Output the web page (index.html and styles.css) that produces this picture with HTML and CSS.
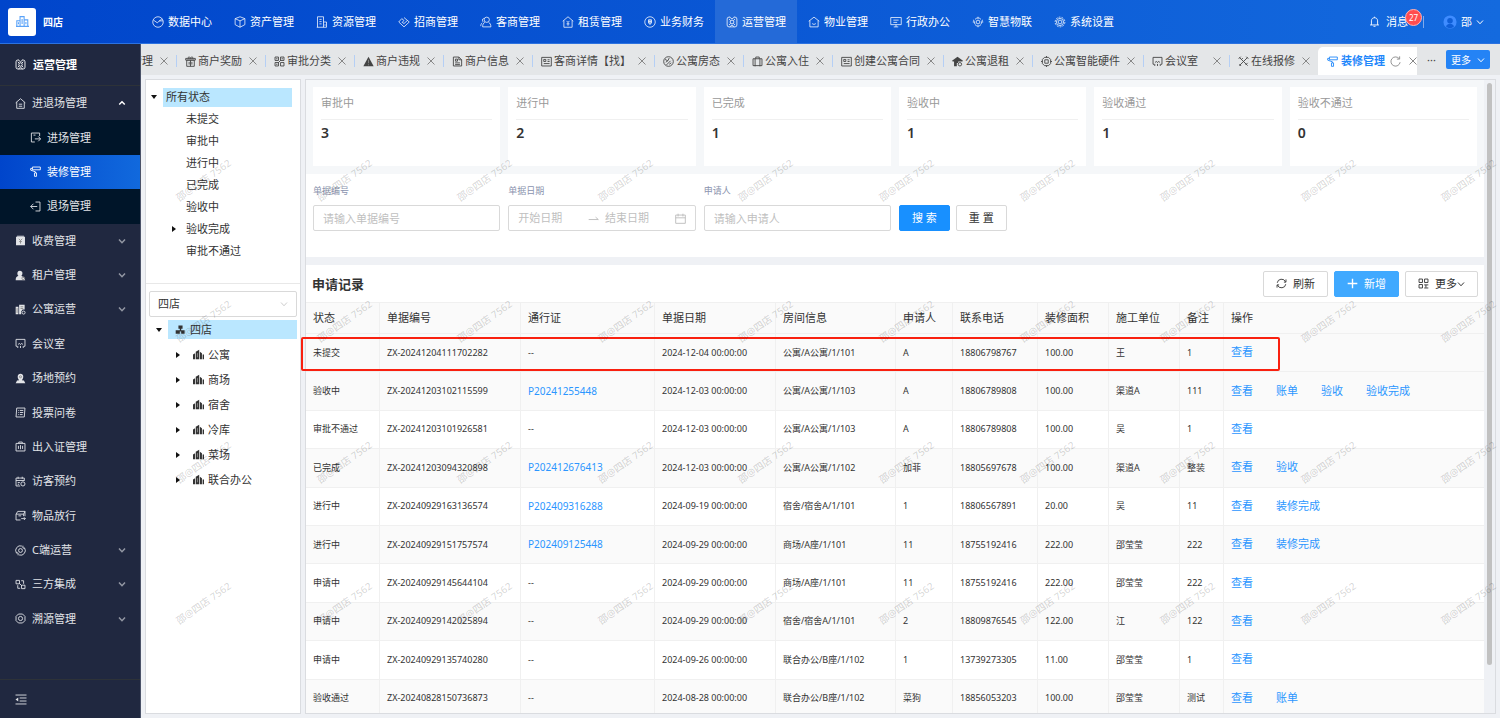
FILE: index.html
```
<!DOCTYPE html>
<html lang="zh-CN">
<head>
  <meta charset="UTF-8">
  <meta name="viewport" content="width=device-width, initial-scale=1.0">
  <title>装修管理</title>
  <link rel="stylesheet" href="styles.css">
</head>
<body>

  <!-- 图标 -->
  <svg class="sprite" aria-hidden="true">
    <symbol id="i-city" viewBox="0 0 16 16"><path d="M1 14V7h4v7M5 14V2h5v12M10 6h4.500v8M0 14h16M7.500 5v6M12.200 8.500v3M3 9v2.500"/></symbol>
    <symbol id="i-pie" viewBox="0 0 16 16"><circle cx="8" cy="8" r="7"/><path d="M2 5.500l5 3.500 6.500-5.500M9.500 6.500h5"/></symbol>
    <symbol id="i-box" viewBox="0 0 16 16"><path d="M8 1l6.500 2.500v8L8 15l-6.500-3.500v-8zM1.500 3.500L8 6.500l6.500-3M8 6.500V15"/></symbol>
    <symbol id="i-doc" viewBox="0 0 16 16"><path d="M2 15V1h8v14M10 8h4v7H1M4.500 4.500h3M4.500 7.500h3M4.500 10.500h3M12 11v2"/></symbol>
    <symbol id="i-shake" viewBox="0 0 16 16"><path d="M8 2l7 6-7 6.500L1 8l4-4.500 3 2.500-2.500 2.500L8 10l4.500-4"/></symbol>
    <symbol id="i-guest" viewBox="0 0 16 16"><circle cx="9" cy="5" r="3.500"/><path d="M6.500 8.500C4 9.500 3.500 12 3.500 14.500h11c0-3-1-5-3-6M5 3C2.500 4 3 7 4.500 8M3 9c-1.500 1-2 3-2 4.500"/></symbol>
    <symbol id="i-rent" viewBox="0 0 16 16"><path d="M1 7l7-6 7 6M2.500 6v9h11V6M6 6.500l2 2 2-2M8 8.500V13M6 10.500h4"/></symbol>
    <symbol id="i-exit-home" viewBox="0 0 16 16"><path d="M1 7l7-6 7 6M2.500 6v9h11V6M5.500 9h5M5.500 12h5"/></symbol>
    <symbol id="i-coin" viewBox="0 0 16 16"><circle cx="8" cy="8" r="7"/><path d="M6 5h4v4.500H6zM6 7.200h4M8 5v7"/></symbol>
    <symbol id="i-ops" viewBox="0 0 16 16"><path d="M5.500 1.500H4A2.500 2.500 0 0 0 1.500 4v8A2.500 2.500 0 0 0 4 14.500h8a2.500 2.500 0 0 0 2.500-2.500V4A2.500 2.500 0 0 0 12 1.500h-1.500M4 4l2 2M12 4l-2 2M4 12l2-2M12 12l-2-2M5 1.500L8 4l3-2.500M5 14.500L8 12l3 2.500"/><circle cx="8" cy="8" r="2.500"/></symbol>
    <symbol id="i-home" viewBox="0 0 16 16"><path d="M1 7l7-5.500L15 7M2.500 6v8.500h11V6M5.500 10c1.500 1.500 3.500 1.500 5 0"/></symbol>
    <symbol id="i-screen" viewBox="0 0 16 16"><path d="M1 2h14v9.500H1zM5 14.500h6M8 11.500v3M4.500 5.500h7M4.500 8.500h5"/></symbol>
    <symbol id="i-iot" viewBox="0 0 16 16"><circle cx="8" cy="8" r="2.500"/><path d="M4 4.500c2-2.500 6-2.500 8 0M4 11.500c2 2.500 6 2.500 8 0M1 8h2M13 8h2M2 5l2 6M14 5l-2 6M8 1v2M8 13v2"/></symbol>
    <symbol id="i-gear" viewBox="0 0 16 16"><circle cx="8" cy="8" r="2.500"/><circle cx="8" cy="8" r="6.500" stroke-dasharray="2.500 1.500"/><circle cx="8" cy="8" r="4.800"/></symbol>
    <symbol id="i-bell" viewBox="0 0 16 16"><path d="M1.500 13h13M3.500 13V7c0-6 9-6 9 0v6M8 1v1.500M6.500 15h3"/></symbol>
    <symbol id="i-user" viewBox="0 0 16 16"><circle cx="8" cy="8" r="7.500" fill="#3f8cff" stroke="none"/><circle cx="8" cy="6.500" r="3.200" fill="#0f5fd8" stroke="none"/><path d="M3.500 13c1-4 8-4 9 0-2.500 2.500-6.500 2.500-9 0z" fill="#0f5fd8" stroke="none"/></symbol>
    <symbol id="i-down" viewBox="0 0 16 16"><path d="M2 5l6 6.500L14 5"/></symbol>
    <symbol id="i-up" viewBox="0 0 16 16"><path d="M2.500 11L8 5.500l5.500 5.500"/></symbol>
    <symbol id="i-close" viewBox="0 0 16 16"><path d="M1 1l14 14M15 1L1 15"/></symbol>
    <symbol id="i-in" viewBox="0 0 16 16"><path d="M14 6V1.500H2v13h5M5 4.500h3M7 10h8M12 6.500l3.500 3.500-3.500 3.500"/></symbol>
    <symbol id="i-roller" viewBox="0 0 16 16"><path d="M3.500 1.500H15v4H3.500zM3.500 3.500H1V6l7 2.500V10M6.500 10h3v5h-3z"/></symbol>
    <symbol id="i-out" viewBox="0 0 16 16"><path d="M8 1.500h6.500v13H8M10.500 8H1M5 4L1 8l4 4"/></symbol>
    <symbol id="i-fee" viewBox="0 0 16 16"><path class="solid" d="M1.500 2.500h13V15h-13zM3 1h10v1H3z"/><path class="cut" d="M5.500 5.500L8 8l2.500-2.500M8 8v4.500M6 9.500h4"/></symbol>
    <symbol id="i-tenant" viewBox="0 0 16 16"><path class="solid" d="M7 1c5 0 4.500 6 2 7.500l3 1.500 3 5H1c0-4 1-5 4-6.500C2.500 6 3 1 7 1z"/><circle class="cut" cx="12" cy="12" r="2"/></symbol>
    <symbol id="i-apart" viewBox="0 0 16 16"><path class="solid" d="M1 4h4v11H1zM6 1h8v7h-3l-2 3v4H6z"/><circle cx="12.500" cy="12.500" r="2.200"/><path class="cut" d="M8 4h4M8 6.500h4M3 6v7"/></symbol>
    <symbol id="i-meet" viewBox="0 0 16 16"><path d="M3 12H1.500V2h13v10H13M4 14.500v-3M12 14.500v-3M8 14.500v-3M5 9.500c0-2 2-2 3 0 1-2 3-2 3 0"/></symbol>
    <symbol id="i-venue" viewBox="0 0 16 16"><path class="solid" d="M1 15l2-4 3-.5C3 7 3 1 8 1s5 6 2 9.500l3 .5 2 4z"/><circle class="cut" cx="8" cy="5.500" r="1.500"/></symbol>
    <symbol id="i-vote" viewBox="0 0 16 16"><path d="M2.500 1.500h12l-1 13h-12zM4.500 5h1M7 5h5M4.500 8h1M7 8h5M4.500 11h1M7 11h4"/></symbol>
    <symbol id="i-pass" viewBox="0 0 16 16"><path d="M1.500 3.500h13v11h-13zM5.500 3.500v-2h5v2M5 7v4.500M8 6v6M11 7v4.500"/></symbol>
    <symbol id="i-visit" viewBox="0 0 16 16"><path d="M1.500 3h12v4M1.500 3v11.500h6M1.500 6.500h12M4.500 1v3M10.500 1v3M4 9.500h3M4 12h2"/><circle cx="11.500" cy="11.500" r="3"/></symbol>
    <symbol id="i-goods" viewBox="0 0 16 16"><path d="M1.500 6h11v3M8 14.500H1.500V6L4 2h10.500v7M12.500 6l2-4M5 8.500h4M9 12.500h6M13 10.500l2 2-2 2"/></symbol>
    <symbol id="i-c" viewBox="0 0 16 16"><path d="M10 1.500A6.800 6.800 0 0 0 2 11.500M6 14.500A6.800 6.800 0 0 0 14 4.500M11.500 1v3.500h3M4.500 15v-3.500h-3"/><circle cx="8" cy="8" r="2.800"/></symbol>
    <symbol id="i-flow" viewBox="0 0 16 16"><path d="M1.500 2h5v5h-5zM9.500 9h5v5h-5zM9 2.500h3.500V7M4 9v4.500h3.500M6 6l4 4"/></symbol>
    <symbol id="i-ring" viewBox="0 0 16 16"><path d="M5 1.500h6L14.500 5v6L11 14.500H5L1.500 11V5z"/><circle cx="8" cy="8" r="3"/></symbol>
    <symbol id="i-fold" viewBox="0 0 16 16"><path d="M0 1.500h16M6 5.800h10M6 10.200h10M0 14.500h16"/><path class="solid" d="M0 8l4-3v6z"/></symbol>
    <symbol id="i-gift" viewBox="0 0 16 16"><path d="M2.500 6h11v9h-11zM1 3.500h14V6H1zM5 3.500c-1-3 2-3 3 0 1-3 4-3 3 0M6 8.500v4M10 8.500v4M8 6v9"/></symbol>
    <symbol id="i-class" viewBox="0 0 16 16"><path d="M1.500 1.500h5v5h-5zM9.500 1.500h5v5h-5zM1.500 9.500h5v5h-5zM9.500 9.500h5v5h-5zM10 6l-4 4M3 4h2M11 4h2M3 12h2"/></symbol>
    <symbol id="i-warn" viewBox="0 0 16 16"><path class="solid" d="M8 1l7.500 14H.5z"/><path class="cut" d="M8 5.500v5M8 12v1.500"/></symbol>
    <symbol id="i-info" viewBox="0 0 16 16"><path d="M2 1.500h8l4 4v9H2zM5 4.500h3v3H5zM4.500 10h7M4.500 12.500h7M10 1.500v4h4"/></symbol>
    <symbol id="i-news" viewBox="0 0 16 16"><path d="M1 2h14v12.500H1zM4 5h3v3H4zM9.500 5.500h3M9.500 8h3M4 11h8.500"/></symbol>
    <symbol id="i-state" viewBox="0 0 16 16"><circle cx="8" cy="8" r="7"/><path d="M3 5l4 2 2-4M5 13l6-6M9 12l3-2M4 9l3-2"/></symbol>
    <symbol id="i-bag" viewBox="0 0 16 16"><path d="M1.500 4h13v10h-13zM5.500 4V1.500h5V4M4.500 4v11M11.500 4v11"/></symbol>
    <symbol id="i-leave" viewBox="0 0 16 16"><path class="solid" d="M0 7l8-6 8 6-1 1H9v2H7v5H3V8H1z"/><circle cx="11.500" cy="12" r="2.500"/></symbol>
    <symbol id="i-chip" viewBox="0 0 16 16"><path d="M5 2h6l3 3v6l-3 3H5l-3-3V5zM5.500 5.500h5v5h-5zM0 8h2M14 8h2M8 0v2M8 14v2"/></symbol>
    <symbol id="i-tools" viewBox="0 0 16 16"><path d="M2 2l12 12M14 2L2 14M1 4l3-3M12 1l3 3M11 13l3-3M2 12l2.500 2.500M5 5l2-2"/></symbol>
    <symbol id="i-reload" viewBox="0 0 16 16"><path d="M13 3.500A6.700 6.700 0 1 0 14.700 9M14 .5v4h-4"/></symbol>
    <symbol id="i-sync" viewBox="0 0 16 16"><path d="M1.800 7a6.300 6.300 0 0 1 12-1.500M14.200 9a6.300 6.300 0 0 1-12 1.500M14.500 2v4h-3M1.500 14v-4h3"/></symbol>
    <symbol id="i-plus" viewBox="0 0 16 16"><path d="M8 1v14M1 8h14"/></symbol>
    <symbol id="i-grid" viewBox="0 0 16 16"><path d="M1.500 1.500h5v5h-5zM9.500 1.500h5v5h-5zM1.500 9.500h5v5h-5zM9 10h6M9 14.500h6M11.500 10v4"/></symbol>
    <symbol id="i-cal" viewBox="0 0 16 16"><path d="M1 3h14v12H1zM1 7h14M4.500 1v4M11.500 1v4"/></symbol>
    <symbol id="i-to" viewBox="0 0 16 16"><path d="M1 9.500h14L11 6"/></symbol>
    <symbol id="i-org" viewBox="0 0 16 16"><path class="solid" d="M5 2h6v5H9v2h5v5H9v-3H7v3H1V9h6V7H5z"/></symbol>
    <symbol id="i-tower" viewBox="0 0 16 16"><path class="solid" d="M0 8l3-2v9H0zM4 4l5-3v14H4zM10 4l3 2v9h-3zM14 8h2v7h-2z"/><path class="cut" d="M6.500 6v6"/></symbol>
  </svg>

  <!-- 顶部导航 -->
  <header class="topbar">
    <div class="brand">
      <span class="logo"><svg class="icon"><use href="#i-city"/></svg></span>
      <strong>四店</strong>
    </div>
    <nav class="topnav">
      <a href="#"><svg class="icon"><use href="#i-pie"/></svg>数据中心</a>
      <a href="#"><svg class="icon"><use href="#i-box"/></svg>资产管理</a>
      <a href="#"><svg class="icon"><use href="#i-doc"/></svg>资源管理</a>
      <a href="#"><svg class="icon"><use href="#i-shake"/></svg>招商管理</a>
      <a href="#"><svg class="icon"><use href="#i-guest"/></svg>客商管理</a>
      <a href="#"><svg class="icon"><use href="#i-rent"/></svg>租赁管理</a>
      <a href="#"><svg class="icon"><use href="#i-coin"/></svg>业务财务</a>
      <a href="#" class="active"><svg class="icon"><use href="#i-ops"/></svg>运营管理</a>
      <a href="#"><svg class="icon"><use href="#i-home"/></svg>物业管理</a>
      <a href="#"><svg class="icon"><use href="#i-screen"/></svg>行政办公</a>
      <a href="#"><svg class="icon"><use href="#i-iot"/></svg>智慧物联</a>
      <a href="#"><svg class="icon"><use href="#i-gear"/></svg>系统设置</a>
    </nav>
    <div class="topbar-right">
      <a href="#" class="message"><svg class="icon"><use href="#i-bell"/></svg>消息<span class="badge">27</span></a>
      <button type="button" class="account"><svg class="avatar"><use href="#i-user"/></svg>邵<svg class="icon-s"><use href="#i-down"/></svg></button>
    </div>
  </header>

  <div class="layout">
    <!-- 侧边菜单 -->
    <aside class="sidebar">
      <div class="side-title"><svg class="icon"><use href="#i-ops"/></svg>运营管理</div>
      <nav class="menu">
        <a href="#" class="menu-item"><svg class="icon"><use href="#i-exit-home"/></svg>进退场管理<svg class="icon-s arrow open"><use href="#i-up"/></svg></a>
        <div class="submenu">
          <a href="#" class="menu-item"><svg class="icon"><use href="#i-in"/></svg>进场管理</a>
          <a href="#" class="menu-item active"><svg class="icon"><use href="#i-roller"/></svg>装修管理</a>
          <a href="#" class="menu-item"><svg class="icon"><use href="#i-out"/></svg>退场管理</a>
        </div>
        <a href="#" class="menu-item"><svg class="icon"><use href="#i-fee"/></svg>收费管理<svg class="icon-s arrow"><use href="#i-down"/></svg></a>
        <a href="#" class="menu-item"><svg class="icon"><use href="#i-tenant"/></svg>租户管理<svg class="icon-s arrow"><use href="#i-down"/></svg></a>
        <a href="#" class="menu-item"><svg class="icon"><use href="#i-apart"/></svg>公寓运营<svg class="icon-s arrow"><use href="#i-down"/></svg></a>
        <a href="#" class="menu-item"><svg class="icon"><use href="#i-meet"/></svg>会议室</a>
        <a href="#" class="menu-item"><svg class="icon"><use href="#i-venue"/></svg>场地预约</a>
        <a href="#" class="menu-item"><svg class="icon"><use href="#i-vote"/></svg>投票问卷</a>
        <a href="#" class="menu-item"><svg class="icon"><use href="#i-pass"/></svg>出入证管理</a>
        <a href="#" class="menu-item"><svg class="icon"><use href="#i-visit"/></svg>访客预约</a>
        <a href="#" class="menu-item"><svg class="icon"><use href="#i-goods"/></svg>物品放行</a>
        <a href="#" class="menu-item"><svg class="icon"><use href="#i-c"/></svg>C端运营<svg class="icon-s arrow"><use href="#i-down"/></svg></a>
        <a href="#" class="menu-item"><svg class="icon"><use href="#i-flow"/></svg>三方集成<svg class="icon-s arrow"><use href="#i-down"/></svg></a>
        <a href="#" class="menu-item"><svg class="icon"><use href="#i-ring"/></svg>溯源管理<svg class="icon-s arrow"><use href="#i-down"/></svg></a>
      </nav>
      <button type="button" class="collapse" aria-label="收起菜单"><svg class="icon"><use href="#i-fold"/></svg></button>
    </aside>

    <main class="main">
      <!-- 页签 -->
      <div class="tabbar">
        <div class="tabs">
          <a href="#" class="tab">管理<svg class="close"><use href="#i-close"/></svg></a>
          <a href="#" class="tab"><svg class="icon"><use href="#i-gift"/></svg>商户奖励<svg class="close"><use href="#i-close"/></svg></a>
          <a href="#" class="tab"><svg class="icon"><use href="#i-class"/></svg>审批分类<svg class="close"><use href="#i-close"/></svg></a>
          <a href="#" class="tab"><svg class="icon"><use href="#i-warn"/></svg>商户违规<svg class="close"><use href="#i-close"/></svg></a>
          <a href="#" class="tab"><svg class="icon"><use href="#i-info"/></svg>商户信息<svg class="close"><use href="#i-close"/></svg></a>
          <a href="#" class="tab"><svg class="icon"><use href="#i-news"/></svg>客商详情【找】<svg class="close"><use href="#i-close"/></svg></a>
          <a href="#" class="tab"><svg class="icon"><use href="#i-state"/></svg>公寓房态<svg class="close"><use href="#i-close"/></svg></a>
          <a href="#" class="tab"><svg class="icon"><use href="#i-bag"/></svg>公寓入住<svg class="close"><use href="#i-close"/></svg></a>
          <a href="#" class="tab"><svg class="icon"><use href="#i-news"/></svg>创建公寓合同<svg class="close"><use href="#i-close"/></svg></a>
          <a href="#" class="tab"><svg class="icon"><use href="#i-leave"/></svg>公寓退租<svg class="close"><use href="#i-close"/></svg></a>
          <a href="#" class="tab"><svg class="icon"><use href="#i-chip"/></svg>公寓智能硬件<svg class="close"><use href="#i-close"/></svg></a>
          <a href="#" class="tab short"><svg class="icon"><use href="#i-meet"/></svg>会议室<svg class="close"><use href="#i-close"/></svg></a>
          <a href="#" class="tab"><svg class="icon"><use href="#i-tools"/></svg>在线报修<svg class="close"><use href="#i-close"/></svg></a>
          <a href="#" class="tab active"><svg class="icon"><use href="#i-roller"/></svg>装修管理<svg class="reload"><use href="#i-reload"/></svg><svg class="close"><use href="#i-close"/></svg></a>
        </div>
        <span class="dots">···</span>
        <button type="button" class="tab-more">更多<svg class="icon-s"><use href="#i-down"/></svg></button>
      </div>

      <div class="workspace">
        <!-- 左侧树 -->
        <section class="trees">
          <div class="status-tree">
            <ul>
              <li class="root"><span class="caret down"></span><span class="node">所有状态</span></li>
              <li>未提交</li>
              <li>审批中</li>
              <li>进行中</li>
              <li>已完成</li>
              <li>验收中</li>
              <li><span class="caret"></span>验收完成</li>
              <li>审批不通过</li>
            </ul>
          </div>
          <div class="place-tree">
            <div class="select">
              <select aria-label="门店"><option>四店</option></select>
              <svg class="icon-s"><use href="#i-down"/></svg>
            </div>
            <ul>
              <li class="root"><span class="caret down"></span><span class="node"><svg class="icon"><use href="#i-org"/></svg>四店</span></li>
              <li><span class="caret"></span><svg class="icon"><use href="#i-tower"/></svg>公寓</li>
              <li><span class="caret"></span><svg class="icon"><use href="#i-tower"/></svg>商场</li>
              <li><span class="caret"></span><svg class="icon"><use href="#i-tower"/></svg>宿舍</li>
              <li><span class="caret"></span><svg class="icon"><use href="#i-tower"/></svg>冷库</li>
              <li><span class="caret"></span><svg class="icon"><use href="#i-tower"/></svg>菜场</li>
              <li><span class="caret"></span><svg class="icon"><use href="#i-tower"/></svg>联合办公</li>
            </ul>
          </div>
        </section>

        <section class="content">
          <div class="content-body">
            <!-- 统计卡片 -->
            <div class="cards">
              <div class="card"><h3>审批中</h3><p>3</p></div>
              <div class="card"><h3>进行中</h3><p>2</p></div>
              <div class="card"><h3>已完成</h3><p>1</p></div>
              <div class="card"><h3>验收中</h3><p>1</p></div>
              <div class="card"><h3>验收通过</h3><p>1</p></div>
              <div class="card"><h3>验收不通过</h3><p>0</p></div>
            </div>

            <!-- 查询条件 -->
            <form class="search">
              <div class="field">
                <label for="code">单据编号</label>
                <input type="text" id="code" class="input" placeholder="请输入单据编号">
              </div>
              <div class="field">
                <label for="date-start">单据日期</label>
                <div class="input range">
                  <input type="text" id="date-start" placeholder="开始日期">
                  <svg class="icon"><use href="#i-to"/></svg>
                  <input type="text" aria-label="结束日期" placeholder="结束日期">
                  <svg class="icon"><use href="#i-cal"/></svg>
                </div>
              </div>
              <div class="field">
                <label for="applicant">申请人</label>
                <input type="text" id="applicant" class="input" placeholder="请输入申请人">
              </div>
              <div class="actions">
                <button type="button" class="btn primary">搜 索</button>
                <button type="button" class="btn">重 置</button>
              </div>
            </form>

            <!-- 申请记录 -->
            <div class="records">
              <div class="records-head">
                <h2>申请记录</h2>
                <button type="button" class="btn"><svg class="icon"><use href="#i-sync"/></svg>刷新</button>
                <button type="button" class="btn add"><svg class="icon"><use href="#i-plus"/></svg>新增</button>
                <button type="button" class="btn more"><svg class="icon"><use href="#i-grid"/></svg><span>更多<svg class="icon-s"><use href="#i-down"/></svg></span></button>
              </div>
              <table>
                <colgroup>
                  <col class="c-status"><col class="c-code"><col class="c-pass"><col class="c-date"><col class="c-room"><col class="c-user"><col class="c-tel"><col class="c-area"><col class="c-unit"><col class="c-note"><col>
                </colgroup>
                <thead>
                  <tr><th>状态</th><th>单据编号</th><th>通行证</th><th>单据日期</th><th>房间信息</th><th>申请人</th><th>联系电话</th><th>装修面积</th><th>施工单位</th><th>备注</th><th>操作</th></tr>
                </thead>
                <tbody>
                  <tr class="hover"><td>未提交</td><td>ZX-20241204111702282</td><td>--</td><td>2024-12-04 00:00:00</td><td>公寓/A公寓/1/101</td><td>A</td><td>18806798767</td><td>100.00</td><td>王</td><td>1</td><td><a href="#">查看</a></td></tr>
                  <tr><td>验收中</td><td>ZX-20241203102115599</td><td><a href="#">P20241255448</a></td><td>2024-12-03 00:00:00</td><td>公寓/A公寓/1/103</td><td>A</td><td>18806789808</td><td>100.00</td><td>渠道A</td><td>111</td><td><a href="#">查看</a><a href="#">账单</a><a href="#">验收</a><a href="#">验收完成</a></td></tr>
                  <tr><td>审批不通过</td><td>ZX-20241203101926581</td><td>--</td><td>2024-12-03 00:00:00</td><td>公寓/A公寓/1/103</td><td>A</td><td>18806789808</td><td>100.00</td><td>吴</td><td>1</td><td><a href="#">查看</a></td></tr>
                  <tr><td>已完成</td><td>ZX-20241203094320898</td><td><a href="#">P202412676413</a></td><td>2024-12-03 00:00:00</td><td>公寓/A公寓/1/102</td><td>加菲</td><td>18805697678</td><td>100.00</td><td>渠道A</td><td>整装</td><td><a href="#">查看</a><a href="#">验收</a></td></tr>
                  <tr><td>进行中</td><td>ZX-20240929163136574</td><td><a href="#">P202409316288</a></td><td>2024-09-19 00:00:00</td><td>宿舍/宿舍A/1/101</td><td>1</td><td>18806567891</td><td>20.00</td><td>吴</td><td>11</td><td><a href="#">查看</a><a href="#">装修完成</a></td></tr>
                  <tr><td>进行中</td><td>ZX-20240929151757574</td><td><a href="#">P202409125448</a></td><td>2024-09-29 00:00:00</td><td>商场/A座/1/101</td><td>11</td><td>18755192416</td><td>222.00</td><td>邵莹莹</td><td>222</td><td><a href="#">查看</a><a href="#">装修完成</a></td></tr>
                  <tr><td>申请中</td><td>ZX-20240929145644104</td><td>--</td><td>2024-09-29 00:00:00</td><td>商场/A座/1/101</td><td>11</td><td>18755192416</td><td>222.00</td><td>邵莹莹</td><td>222</td><td><a href="#">查看</a></td></tr>
                  <tr><td>申请中</td><td>ZX-20240929142025894</td><td>--</td><td>2024-09-29 00:00:00</td><td>宿舍/宿舍A/1/101</td><td>2</td><td>18809876545</td><td>122.00</td><td>江</td><td>122</td><td><a href="#">查看</a></td></tr>
                  <tr><td>申请中</td><td>ZX-20240929135740280</td><td>--</td><td>2024-09-26 00:00:00</td><td>联合办公/B座/1/102</td><td>1</td><td>13739273305</td><td>11.00</td><td>邵莹莹</td><td>1</td><td><a href="#">查看</a></td></tr>
                  <tr><td>验收通过</td><td>ZX-20240828150736873</td><td>--</td><td>2024-08-28 00:00:00</td><td>联合办公/B座/1/102</td><td>菜狗</td><td>18856053203</td><td>100.00</td><td>邵莹莹</td><td>测试</td><td><a href="#">查看</a><a href="#">账单</a></td></tr>
                </tbody>
              </table>
            </div>
          </div>
          <div class="scroll"><span></span></div>
        </section>

        <!-- 标注框 -->
        <div class="mark"></div>
      </div>
    </main>
  </div>

  <!-- 水印 -->
  <div class="watermark" aria-hidden="true">
    <span>邵@四店 7562</span><span>邵@四店 7562</span><span>邵@四店 7562</span><span>邵@四店 7562</span><span>邵@四店 7562</span><span>邵@四店 7562</span><span>邵@四店 7562</span><span>邵@四店 7562</span><span>邵@四店 7562</span><span>邵@四店 7562</span>
    <span>邵@四店 7562</span><span>邵@四店 7562</span><span>邵@四店 7562</span><span>邵@四店 7562</span><span>邵@四店 7562</span><span>邵@四店 7562</span><span>邵@四店 7562</span><span>邵@四店 7562</span><span>邵@四店 7562</span><span>邵@四店 7562</span>
    <span>邵@四店 7562</span><span>邵@四店 7562</span><span>邵@四店 7562</span><span>邵@四店 7562</span><span>邵@四店 7562</span><span>邵@四店 7562</span><span>邵@四店 7562</span><span>邵@四店 7562</span><span>邵@四店 7562</span><span>邵@四店 7562</span>
    <span>邵@四店 7562</span><span>邵@四店 7562</span><span>邵@四店 7562</span><span>邵@四店 7562</span><span>邵@四店 7562</span><span>邵@四店 7562</span><span>邵@四店 7562</span><span>邵@四店 7562</span><span>邵@四店 7562</span><span>邵@四店 7562</span>
  </div>

</body>
</html>
```

FILE: styles.css
```
* {
  box-sizing: border-box;
}

body {
  margin: 0;
  height: 100vh;
  display: flex;
  flex-direction: column;
  overflow: hidden;
  position: relative;
  background: #eff1f5;
  color: #333;
  font: 11px/16px "Noto Sans", "Noto Sans CJK SC", sans-serif;
}

a {
  color: inherit;
  text-decoration: none;
}

button,
input,
select {
  font: inherit;
  color: inherit;
}

button {
  cursor: pointer;
}

ul {
  list-style: none;
  margin: 0;
  padding: 0;
}

/* 图标 */
.sprite {
  position: absolute;
  width: 0;
  height: 0;
}

svg {
  flex: none;
  fill: none;
  stroke: currentColor;
  stroke-width: 1.3;
}

.solid {
  fill: currentColor;
  stroke: none;
}

.cut {
  stroke: #888;
}

.icon {
  width: 11px;
  height: 11px;
}

.icon-s {
  width: 8px;
  height: 8px;
  stroke-width: 2;
}

/* 顶部导航 */
.topbar {
  flex: none;
  height: 44px;
  display: flex;
  align-items: stretch;
  background: linear-gradient(90deg, #0045cb, #146ade);
  border-bottom: 1px solid #2c72e0;
  color: #fff;
}

.brand {
  width: 141px;
  flex: none;
  display: flex;
  align-items: center;
  gap: 7px;
  padding-left: 8px;
  font-size: 10px;
}

.logo {
  width: 28px;
  height: 28px;
  display: flex;
  align-items: center;
  justify-content: center;
  background: #fff;
  border-radius: 3px;
  color: #5aa2f8;
}

.logo .icon {
  width: 13px;
  height: 13px;
}

.topnav {
  display: flex;
  flex: 1;
}

.topnav a {
  display: flex;
  align-items: center;
  gap: 4px;
  padding: 0 11px;
  white-space: nowrap;
}

.topnav .icon {
  width: 12px;
  height: 12px;
  stroke-width: 1;
}

.topnav .active {
  background: #246ad8;
}

.topbar-right {
  display: flex;
  align-items: center;
  gap: 19px;
  padding-right: 16px;
}

.message {
  position: relative;
  display: flex;
  align-items: center;
  gap: 6px;
  padding-right: 15px;
  border-right: 1px solid #7fa9ec;
  line-height: 12px;
}

.badge {
  position: absolute;
  top: -7px;
  right: 1px;
  width: 17px;
  height: 17px;
  border: 1px solid #ffb3b3;
  border-radius: 9px;
  background: #ff4d4f;
  font-size: 8px;
  line-height: 15px;
  text-align: center;
}

.account {
  display: flex;
  align-items: center;
  gap: 4px;
  padding: 0;
  border: 0;
  background: none;
}

.avatar {
  width: 14px;
  height: 14px;
}

/* 侧边菜单 */
.layout {
  flex: 1;
  min-height: 0;
  display: flex;
}

.sidebar {
  flex: none;
  width: 141px;
  display: flex;
  flex-direction: column;
  background: #202840;
  border-right: 1px solid #4a5268;
  color: #e2e4e8;
}

.side-title {
  flex: none;
  height: 42px;
  display: flex;
  align-items: center;
  gap: 7px;
  padding-left: 15px;
  border-bottom: 1px solid #2d3238;
  color: #fff;
  font-weight: bold;
}

.menu {
  flex: 1;
  display: flex;
  flex-direction: column;
  padding-bottom: 43px;
}

.menu-item {
  flex: 1;
  display: flex;
  align-items: center;
  gap: 6px;
  padding: 0 14px 0 15px;
}

.arrow {
  margin-left: auto;
  color: #9297a3;
  stroke-width: 3;
}

.arrow.open {
  color: #fff;
}

.submenu {
  flex: 3;
  display: flex;
  flex-direction: column;
  background: #001529;
}

.submenu .menu-item {
  padding-left: 30px;
}

.menu-item.active {
  background: linear-gradient(90deg, #0045cb, #1169dd);
  color: #fff;
}

.collapse {
  flex: none;
  height: 39px;
  display: flex;
  align-items: center;
  padding: 0 15px;
  border: 0;
  border-top: 1px solid #2d3238;
  background: none;
}

.collapse .icon {
  width: 12px;
}

/* 页签 */
.main {
  flex: 1;
  min-width: 0;
  display: flex;
  flex-direction: column;
}

.tabbar {
  flex: none;
  height: 31px;
  display: flex;
  align-items: center;
  padding-right: 10px;
  background: #e4e6e8;
  color: #444;
}

.tabs {
  flex: 1;
  min-width: 0;
  align-self: stretch;
  display: flex;
  align-items: center;
  justify-content: flex-end;
  overflow: hidden;
  padding-top: 3px;
}

.tab {
  flex: none;
  display: flex;
  align-items: center;
  gap: 2px;
  padding: 0 8px;
  border-left: 1px solid #b5cff5;
  line-height: 12px;
  white-space: nowrap;
}

.close {
  width: 8px;
  height: 8px;
  margin-left: 5px;
  color: #888;
  stroke-width: 2;
}

.tab.short {
  width: 86px;
}

.short .close {
  margin-left: auto;
}

.tab.active {
  align-self: stretch;
  gap: 3px;
  padding: 0 0 0 9px;
  width: 99px;
  border: 0;
  border-radius: 5px 0 0 0;
  background: #fff;
  color: #1f87fb;
  font-weight: bold;
}

.reload {
  width: 11px;
  height: 11px;
  margin-left: 2px;
  color: #888;
}

.dots {
  width: 29px;
  text-align: center;
}

.tab-more {
  width: 44px;
  height: 19px;
  display: flex;
  align-items: center;
  justify-content: center;
  gap: 6px;
  padding: 0;
  border: 0;
  border-radius: 2px;
  background: #2483f5;
  color: #fff;
  font-size: 10px;
}

/* 工作区 */
.workspace {
  flex: 1;
  min-height: 0;
  position: relative;
  display: flex;
  gap: 4px;
  padding: 4px;
}

.trees {
  flex: none;
  width: 156px;
  display: flex;
  flex-direction: column;
  background: #fff;
  border: 1px solid #dadce0;
}

.status-tree {
  height: 204px;
  flex: none;
  padding: 6px 8px 0 5px;
  border-bottom: 1px solid #e8e8e8;
}

.status-tree li {
  position: relative;
  height: 22px;
  padding-left: 35px;
  line-height: 22px;
}

.trees .root {
  display: flex;
  align-items: center;
  padding-left: 0;
}

.node {
  flex: 1;
  height: 19px;
  display: flex;
  align-items: center;
  gap: 4px;
  margin-left: 6px;
  padding-left: 3px;
  background: #bae7ff;
}

.caret {
  width: 0;
  height: 0;
  border: solid transparent;
  border-width: 3px 0 3px 4px;
  border-left-color: #111;
}

.caret.down {
  border-width: 4px 3px 0;
  border-color: #111 transparent transparent;
}

.status-tree .caret:not(.down) {
  position: absolute;
  left: 21px;
  top: 8px;
}

.place-tree {
  padding: 7px 3px 0;
}

.select {
  position: relative;
}

.select select {
  display: block;
  width: 100%;
  height: 26px;
  padding: 0 8px;
  border: 1px solid #d9d9d9;
  border-radius: 2px;
  background: #fff;
  appearance: none;
}

.select svg {
  position: absolute;
  right: 9px;
  top: 9px;
  color: #bbb;
  stroke-width: 1.5;
}

.place-tree li {
  height: 25px;
  display: flex;
  align-items: center;
  padding-left: 27px;
}

.place-tree li .icon {
  color: #333;
}

.place-tree li > .icon {
  margin: 0 4px 0 13px;
}

.place-tree .root .caret {
  margin-left: 7px;
}

.place-tree .node {
  padding-left: 7px;
}

.content {
  flex: 1;
  min-width: 0;
  display: flex;
  border: 1px solid #dadce0;
}

.content-body {
  flex: 1;
  min-width: 0;
  display: flex;
  flex-direction: column;
  overflow: hidden;
}

.scroll {
  flex: none;
  width: 11px;
  padding: 3px 3px 48px;
}

.scroll span {
  display: block;
  width: 5px;
  height: 100%;
  border-radius: 3px;
  background: #c1c1c1;
}

/* 统计卡片 */
.cards {
  display: grid;
  grid-template-columns: repeat(6, minmax(0, 1fr));
  gap: 8px;
  padding: 7px 7px 8px;
  background: #f5f7f9;
}

.card {
  height: 79px;
  padding: 8px 8px 0;
  background: #fff;
}

.card h3 {
  margin: 0;
  height: 25px;
  border-bottom: 1px solid #f0f0f0;
  color: #999;
  font-size: 11px;
  font-weight: normal;
}

.card p {
  margin: 5px 0 0;
  font-size: 14px;
  font-weight: 600;
}

/* 查询条件 */
.search {
  display: grid;
  grid-template-columns: repeat(6, minmax(0, 1fr));
  gap: 8px;
  padding: 9px 7px 26px;
  background: #fff;
}

.field label {
  display: block;
  margin-bottom: 6px;
  color: #8a93ae;
  font-size: 9px;
}

.input {
  width: 100%;
  height: 26px;
  padding: 0 9px;
  border: 1px solid #d9d9d9;
  border-radius: 2px;
  background: #fff;
}

.range {
  display: flex;
  align-items: center;
  color: #bbb;
}

.range input {
  flex: 1;
  min-width: 0;
  padding: 0;
  border: 0;
}

.range .icon:not(:last-child) {
  margin-right: 6px;
}

::placeholder {
  color: #bfbfbf;
}

.actions {
  display: flex;
  align-items: flex-end;
  gap: 6px;
}

.btn {
  height: 26px;
  display: flex;
  align-items: center;
  gap: 6px;
  padding: 0 12px;
  border: 1px solid #d9d9d9;
  border-radius: 2px;
  background: #fff;
  white-space: nowrap;
}

.btn.primary {
  border-color: #1890ff;
  background: #1890ff;
  color: #fff;
}

.btn.add {
  border-color: #40a9ff;
  background: #40a9ff;
  color: #fff;
}

.add .icon {
  stroke-width: 2;
}

/* 申请记录 */
.records {
  flex: 1;
  margin-top: 8px;
  background: #fff;
}

.records-head {
  height: 37px;
  display: flex;
  align-items: center;
  gap: 6px;
  padding: 0 6px;
}

.records-head h2 {
  flex: 1;
  margin: 0;
  font-size: 13px;
}

.more span {
  display: flex;
  align-items: center;
}

table {
  width: 100%;
  height: 416px;
  table-layout: fixed;
  border-collapse: separate;
  border-spacing: 0;
}

.c-status { width: 74px; }
.c-code { width: 141px; }
.c-pass { width: 134px; }
.c-date { width: 121px; }
.c-room { width: 120px; }
.c-user { width: 57px; }
.c-tel { width: 85px; }
.c-area { width: 71px; }
.c-unit { width: 71px; }
.c-note { width: 44px; }

th,
td {
  padding: 0 0 0 7px;
  border-right: 1px solid #f0f0f0;
  border-bottom: 1px solid #f0f0f0;
  text-align: left;
  white-space: nowrap;
}

th:last-child,
td:last-child {
  border-right: 0;
}

th {
  height: 32px;
  border-top: 1px solid #f0f0f0;
  background: #fafafa;
  font-weight: normal;
}

td {
  font-size: 9px;
}

tbody tr:nth-child(even),
tbody .hover {
  background: #fafafa;
}

td a {
  color: #2b96ff;
  font-size: 10px;
}

td:last-child a {
  margin-right: 23px;
  font-size: 11px;
}

/* 标注框 */
.mark {
  position: absolute;
  top: 262px;
  left: 160px;
  right: 220px;
  height: 34px;
  border: 2px solid #f9200f;
  border-radius: 2px;
}

/* 水印 */
.watermark {
  position: absolute;
  top: 109px;
  left: 133px;
  right: -39px;
  display: grid;
  grid-template-columns: repeat(10, 1fr);
  grid-auto-rows: 141px;
  place-items: center;
  color: rgba(0, 0, 0, 0.16);
  font-size: 10px;
  font-weight: 500;
  pointer-events: none;
}

.watermark span {
  transform: rotate(-35deg);
}
```
